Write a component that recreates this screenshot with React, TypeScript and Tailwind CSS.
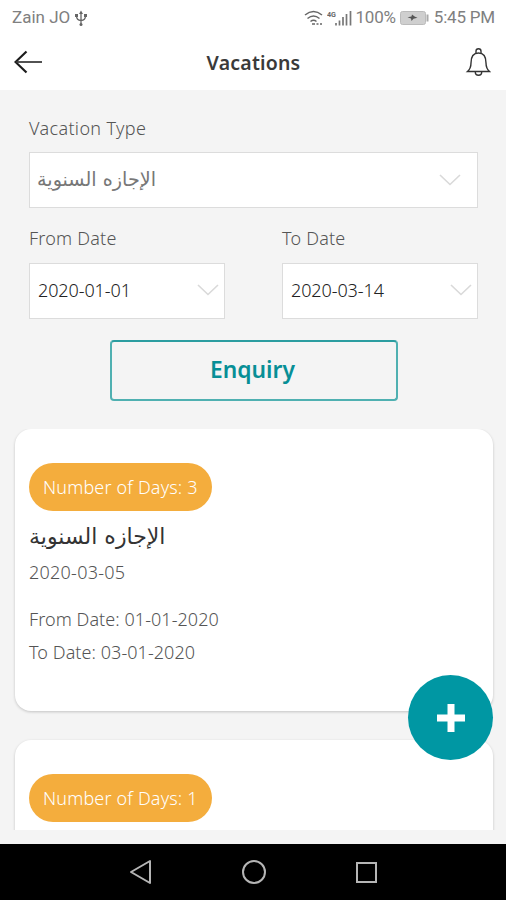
import type { ReactNode } from "react";

function StatusBar() {
  return (
    <div className="flex h-9 shrink-0 items-center justify-between bg-white pl-3 pr-[11px] font-[Roboto,sans-serif] text-[17px] text-[#808080]">
      <div className="flex items-center gap-[5px]">
        <span>Zain JO</span>
        <svg width="12" height="17" viewBox="0 0 12 17" fill="none" stroke="#666" strokeWidth="1.3">
          <path d="M6 3v11M1.500 5.500c0 4 1.500 5 4.500 5s4.500-1 4.500-5" />
          <path d="M6 .5 8 4H4z" fill="#666" stroke="none" />
          <path d="M0 4h3v3H0zM9 4h3v3H9z" fill="#666" stroke="none" />
          <circle cx="6" cy="14.500" r="1.500" fill="#666" stroke="none" />
        </svg>
      </div>
      <div className="flex items-center">
        <svg width="20" height="16" viewBox="0 0 20 16" fill="none" stroke="#666" strokeWidth="1.500">
          <path d="M1 5q8.500-7 17 0M3.500 8.500q6-5 12 0M6.500 11.500q3-2.500 6 0" />
          <path d="M8 14h3M12.500 14h2M16 14h2" />
        </svg>
        <svg width="26" height="16" viewBox="0 0 26 16" className="ml-[3px]">
          <text x="0" y="7" fontSize="8" fontWeight="700" fill="#666" textLength="9" lengthAdjust="spacingAndGlyphs">4G</text>
          <path d="M9 13v2.500M12.500 10.500v5M16 7v8.500M19.500 4v11.500M23.500 1v14.500" stroke="#777" strokeWidth="1.700" />
        </svg>
        <span className="ml-[3px] tracking-[-0.2px]">100%</span>
        <svg width="29" height="14" viewBox="0 0 29 14" className="ml-1">
          <rect x=".5" y=".5" width="25" height="13" rx="2" fill="#cfcfcf" stroke="#bbb" />
          <rect x="26.500" y="3.500" width="2" height="7" fill="#aaa" />
          <path d="M7.500 6.300l4-.8.5-2 3 2.300 2.500 1-4 1-2 2.200-.5-2.500z" fill="#555" />
        </svg>
        <span className="ml-[5px] tracking-[-0.2px]">5:45 PM</span>
      </div>
    </div>
  );
}

function Header() {
  return (
    <div className="flex h-[54px] shrink-0 items-center justify-between bg-white pb-1 pl-3.5 pr-[15px]">
      <svg width="28" height="24" viewBox="0 0 28 24" fill="none" className="mt-0.5">
        <path d="M12.500 1.500 1.500 12l11 10.500" stroke="#1c1c1c" strokeWidth="2.200" />
        <path d="M2 12h26" stroke="#333" strokeWidth="1.700" />
      </svg>
      <div className="mt-[3px] text-[19.500px] font-semibold tracking-[0.200px] text-[#3a3a3a]">Vacations</div>
      <svg width="26" height="30" viewBox="0 0 26 30" fill="none" stroke="#333" strokeWidth="1.400" className="mt-0.5">
        <path d="M2.500 24.500h22c-2.800-2.500-3.500-4-3.500-8.500 0-6.500-2.500-10-7.500-10S6 9.500 6 16c0 4.500-.7 6-3.500 8.500z" />
        <path d="M11 6V4.300a2.500 2.500 0 0 1 5 0V6M10.300 25a3.200 3.200 0 0 0 6.400 0" />
      </svg>
    </div>
  );
}

function Chevron() {
  return (
    <svg width="22" height="12" viewBox="0 0 22 12" fill="none" stroke="#d9d9d9" strokeWidth="1.600">
      <path d="M1 1l10 9.500L21 1" />
    </svg>
  );
}

function DateField({ label, value }: { label: string; value: string }) {
  return (
    <div className="w-[196px]">
      <div className="h-6 text-lg leading-6 font-light tracking-[0.200px] text-[#555]">{label}</div>
      <div className="mt-[13px] flex h-14 items-center justify-between border border-[#dcdcdc] bg-white pb-0.5 pl-2 pr-[5px] text-lg text-[#222]">
        <span className="font-light tracking-[-0.1px]">{value}</span>
        <Chevron />
      </div>
    </div>
  );
}

function DaysBadge({ days }: { days: number }) {
  return (
    <div className="inline-flex h-12 items-center rounded-full bg-[#f4ad3d] px-3.5 text-lg font-light tracking-[0.160px] text-white">
      Number of Days: {days}
    </div>
  );
}

function Card({ children }: { children: ReactNode }) {
  return (
    <div className="mr-[13px] ml-[15px] h-[282px] shrink-0 rounded-2xl bg-white px-3.5 pt-[34px] shadow-[0_1px_3px_rgba(0,0,0,0.2)]">
      {children}
    </div>
  );
}

export default function App() {
  return (
    <div className="relative flex h-[900px] w-[506px] flex-col overflow-hidden bg-[#f4f4f4] font-['Noto_Sans',sans-serif]">
      <StatusBar />
      <Header />

      <div className="h-[339px] shrink-0 pr-7 pl-[29px] pt-[26px]">
        <div className="h-6 text-lg leading-6 font-light tracking-[0.350px] text-[#555]">Vacation Type</div>
        <div className="mt-3 flex h-14 items-center justify-between border border-[#dcdcdc] bg-white pl-[7px] pr-4">
          <span dir="rtl" className="font-['DejaVu_Sans',sans-serif] text-[19.200px] text-[#777]">الإجازه السنوية</span>
          <Chevron />
        </div>
        <div className="mt-[18px] flex justify-between">
          <DateField label="From Date" value="2020-01-01" />
          <DateField label="To Date" value="2020-03-14" />
        </div>
        <button className="mx-auto mt-[21px] flex h-[61px] w-[288px] items-center justify-center rounded border-2 border-[#4fb0b1] border-t-[#2b9da0] pr-0.5 text-[22.800px] font-semibold text-[#078f96]">
          Enquiry
        </button>
      </div>

      <div className="flex h-[401px] shrink-0 flex-col gap-[29px] overflow-hidden">
        <Card>
          <DaysBadge days={3} />
          <div className="mt-[10px] h-8 font-['DejaVu_Sans',sans-serif] text-[22px] leading-8 text-[#333]">الإجازه السنوية</div>
          <div className="mt-[5px] text-lg leading-7 font-light tracking-[0.250px] text-[#555]">2020-03-05</div>
          <div className="mt-[17px] text-lg leading-[33px] font-light tracking-[0.060px] text-[#555]">
            <div>From Date: 01-01-2020</div>
            <div>To Date: 03-01-2020</div>
          </div>
        </Card>
        <Card>
          <DaysBadge days={1} />
        </Card>
      </div>

      <button aria-label="Add vacation" className="absolute top-[675px] left-[408px] flex size-[85px] items-center justify-center rounded-full bg-[#0097a3]">
        <svg width="28" height="28" viewBox="0 0 28 28" stroke="#fff" strokeWidth="7">
          <path d="M14 0v28M0 14h28" />
        </svg>
      </button>

      <div className="mt-auto flex h-14 items-center justify-center gap-[89px] bg-black pl-px">
        <svg width="24" height="26" viewBox="0 0 24 26" fill="none" stroke="#b5b5b5" strokeWidth="2" strokeLinejoin="round">
          <path d="M21 2v22L2 13z" />
        </svg>
        <svg width="24" height="24" viewBox="0 0 24 24" fill="none" stroke="#b5b5b5" strokeWidth="2">
          <circle cx="12" cy="12" r="11" />
        </svg>
        <svg width="24" height="24" viewBox="0 0 24 24" fill="none" stroke="#b5b5b5" strokeWidth="2">
          <rect x="2" y="3" width="19" height="19" />
        </svg>
      </div>
    </div>
  );
}
